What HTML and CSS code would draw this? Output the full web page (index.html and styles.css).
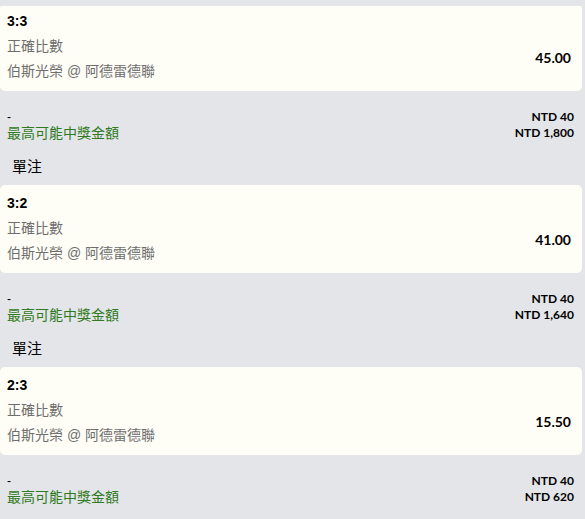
FILE: index.html
```html
<!DOCTYPE html>
<html lang="zh-Hant">
<head>
    <meta charset="UTF-8">
    <meta name="viewport" content="width=device-width, initial-scale=1.0">
    <title>投注單</title>
    <link rel="stylesheet" href="styles.css">
</head>
<body>
  <div class="slip">
    <div class="bet">
      <div class="card">
        <div class="info">
          <div class="pick">3:3</div>
          <div class="market">正確比數</div>
          <div class="event">伯斯光榮 @ 阿德雷德聯</div>
        </div>
        <div class="odds">45.00</div>
      </div>
      <div class="summary">
        <div class="row">
          <span class="dash">-</span>
          <span class="amount">NTD 40</span>
        </div>
        <div class="row">
          <span class="label">最高可能中獎金額</span>
          <span class="amount">NTD 1,800</span>
        </div>
      </div>
      <div class="type">單注</div>
    </div>

    <div class="bet">
      <div class="card">
        <div class="info">
          <div class="pick">3:2</div>
          <div class="market">正確比數</div>
          <div class="event">伯斯光榮 @ 阿德雷德聯</div>
        </div>
        <div class="odds">41.00</div>
      </div>
      <div class="summary">
        <div class="row">
          <span class="dash">-</span>
          <span class="amount">NTD 40</span>
        </div>
        <div class="row">
          <span class="label">最高可能中獎金額</span>
          <span class="amount">NTD 1,640</span>
        </div>
      </div>
      <div class="type">單注</div>
    </div>

    <div class="bet">
      <div class="card">
        <div class="info">
          <div class="pick">2:3</div>
          <div class="market">正確比數</div>
          <div class="event">伯斯光榮 @ 阿德雷德聯</div>
        </div>
        <div class="odds">15.50</div>
      </div>
      <div class="summary">
        <div class="row">
          <span class="dash">-</span>
          <span class="amount">NTD 40</span>
        </div>
        <div class="row">
          <span class="label">最高可能中獎金額</span>
          <span class="amount">NTD 620</span>
        </div>
      </div>
    </div>
  </div>
</body>
</html>
```

FILE: styles.css
```css
:root {
    --page-bg: #e4e5e8;
    --card-bg: #fffef6;
    --muted: #6e6e6e;
    --green: #2f7a22;
}

body {
    margin: 0;
    background-color: var(--page-bg);
    color: #000;
    font-family: "Liberation Sans", "Noto Sans CJK TC", sans-serif;
    font-size: 14px;
}

.slip {
    width: 582px;
    padding-top: 6px;
}

.card {
    display: flex;
    justify-content: space-between;
    align-items: flex-end;
    background-color: var(--card-bg);
    border-radius: 5px;
    padding: 8px 11px 10px 7px;
}

/* first card sits slightly scrolled up */
.bet:first-child .card {
    padding-top: 5px;
    border-top-left-radius: 2px;
    border-top-right-radius: 2px;
}

.pick {
    font-weight: bold;
    line-height: 20px;
}

.market,
.event {
    color: var(--muted);
    line-height: 20px;
    margin-top: 5px;
}

.odds {
    font-family: Lato, "Liberation Sans", sans-serif;
    font-weight: bold;
    line-height: 20px;
    margin-bottom: 13px;
}

.summary {
    margin-top: 18px;
    padding: 0 8px 0 7px;
}

.row {
    display: flex;
    justify-content: space-between;
    line-height: 16px;
}

.dash {
    font-size: 12px;
}

.label {
    color: var(--green);
    font-size: 14px;
}

.amount {
    font-family: Lato, "Liberation Sans", sans-serif;
    font-weight: bold;
    font-size: 12px;
}

.type {
    margin: 16px 0 8px 12px;
    font-size: 15px;
    line-height: 20px;
}
```
